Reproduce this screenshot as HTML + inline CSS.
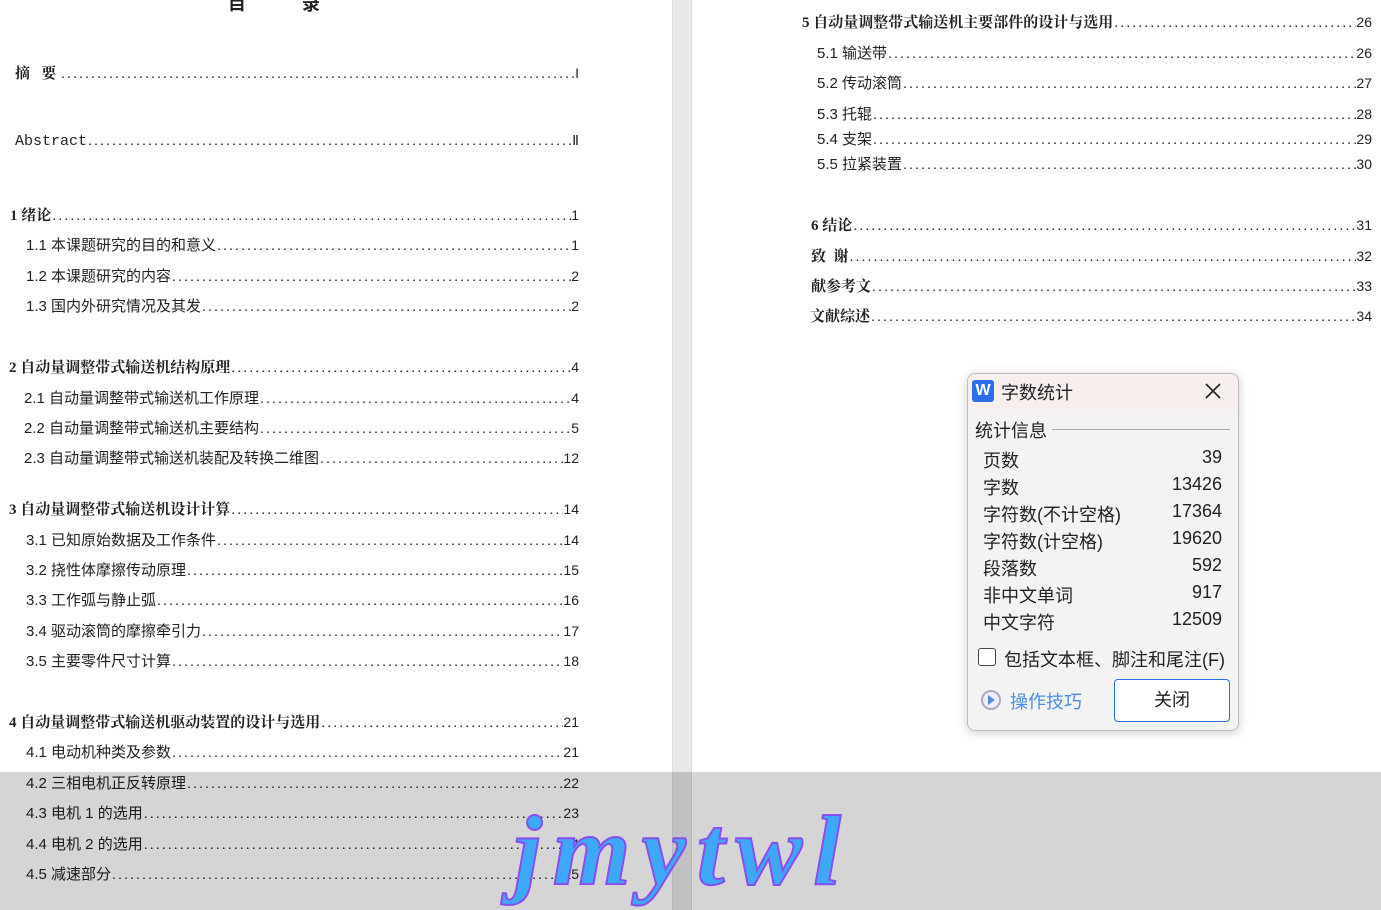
<!DOCTYPE html><html><head><meta charset="utf-8"><style>
*{margin:0;padding:0;box-sizing:border-box}
body{width:1381px;height:910px;overflow:hidden;background:#fff;position:relative;font-family:"Liberation Sans","Noto Sans CJK SC",sans-serif;color:#222}
.gut{position:absolute;left:672px;top:0;width:20px;height:910px;background:#e8e8e8;border-left:1px solid #ddd;border-right:1px solid #ddd}
.r{position:absolute;display:flex;align-items:baseline;font-size:15px;line-height:18px;height:18px;white-space:nowrap}
.r .t{flex:none}
.r .d{flex:1;overflow:hidden;letter-spacing:0;font-family:"Liberation Mono",monospace;font-size:10px;font-weight:bold}
.r .d::after{content:"................................................................................................................................................................................................"}
.r .n{flex:none;font-family:"Liberation Sans",sans-serif;font-size:14px}
.b{font-weight:bold;font-family:"Liberation Serif","Noto Serif CJK SC",serif}
.dlg{position:absolute;left:967px;top:373px;width:272px;height:358px;background:#f3f3f3;border:1px solid #bdbdbd;border-radius:8px;box-shadow:0 2px 10px rgba(0,0,0,.2);font-size:18px;color:#222}
.row{position:absolute;left:15px;right:16px;display:flex;justify-content:space-between;font-size:18px}
.ov{position:absolute;left:0;top:772px;width:1381px;height:138px;background:rgba(0,0,0,.165)}
</style></head><body>
<div class="gut"></div>
<div style="position:absolute;left:228px;top:-10px;font-size:18px;font-weight:bold">目</div>
<div style="position:absolute;left:302px;top:-10px;font-size:18px;font-weight:bold">录</div>

<div class="r" style="left:15px;top:64px;width:564px"><span class="t b">摘&nbsp;&nbsp;&nbsp;要&nbsp;</span><span class="d"></span><span class="n">I</span></div>
<div class="r" style="left:15px;top:131px;width:564px"><span class="t" style="font-family:'Liberation Mono',monospace">Abstract</span><span class="d"></span><span class="n">Ⅱ</span></div>
<div class="r" style="left:10px;top:206px;width:569px"><span class="t b">1 绪论</span><span class="d"></span><span class="n">1</span></div>
<div class="r" style="left:26px;top:236px;width:553px"><span class="t">1.1 本课题研究的目的和意义 </span><span class="d"></span><span class="n">1</span></div>
<div class="r" style="left:26px;top:267px;width:553px"><span class="t">1.2 本课题研究的内容</span><span class="d"></span><span class="n">2</span></div>
<div class="r" style="left:26px;top:297px;width:553px"><span class="t">1.3 国内外研究情况及其发</span><span class="d"></span><span class="n">2</span></div>
<div class="r" style="left:9px;top:358px;width:570px"><span class="t b">2 自动量调整带式输送机结构原理</span><span class="d"></span><span class="n">4</span></div>
<div class="r" style="left:24px;top:389px;width:555px"><span class="t">2.1 自动量调整带式输送机工作原理</span><span class="d"></span><span class="n">4</span></div>
<div class="r" style="left:24px;top:419px;width:555px"><span class="t">2.2 自动量调整带式输送机主要结构</span><span class="d"></span><span class="n">5</span></div>
<div class="r" style="left:24px;top:449px;width:555px"><span class="t">2.3 自动量调整带式输送机装配及转换二维图</span><span class="d"></span><span class="n">12</span></div>
<div class="r" style="left:9px;top:500px;width:570px"><span class="t b">3 自动量调整带式输送机设计计算</span><span class="d"></span><span class="n">14</span></div>
<div class="r" style="left:26px;top:531px;width:553px"><span class="t">3.1 已知原始数据及工作条件</span><span class="d"></span><span class="n">14</span></div>
<div class="r" style="left:26px;top:561px;width:553px"><span class="t">3.2 挠性体摩擦传动原理</span><span class="d"></span><span class="n">15</span></div>
<div class="r" style="left:26px;top:591px;width:553px"><span class="t">3.3 工作弧与静止弧</span><span class="d"></span><span class="n">16</span></div>
<div class="r" style="left:26px;top:622px;width:553px"><span class="t">3.4 驱动滚筒的摩擦牵引力</span><span class="d"></span><span class="n">17</span></div>
<div class="r" style="left:26px;top:652px;width:553px"><span class="t">3.5 主要零件尺寸计算</span><span class="d"></span><span class="n">18</span></div>
<div class="r" style="left:9px;top:713px;width:570px"><span class="t b">4 自动量调整带式输送机驱动装置的设计与选用</span><span class="d"></span><span class="n">21</span></div>
<div class="r" style="left:26px;top:743px;width:553px"><span class="t">4.1 电动机种类及参数</span><span class="d"></span><span class="n">21</span></div>
<div class="r" style="left:26px;top:774px;width:553px"><span class="t">4.2 三相电机正反转原理</span><span class="d"></span><span class="n">22</span></div>
<div class="r" style="left:26px;top:804px;width:553px"><span class="t">4.3 电机 1 的选用</span><span class="d"></span><span class="n">23</span></div>
<div class="r" style="left:26px;top:835px;width:553px"><span class="t">4.4 电机 2 的选用</span><span class="d"></span><span class="n">24</span></div>
<div class="r" style="left:26px;top:865px;width:553px"><span class="t">4.5 减速部分</span><span class="d"></span><span class="n">25</span></div>

<div class="r" style="left:802px;top:13px;width:570px"><span class="t b">5 自动量调整带式输送机主要部件的设计与选用</span><span class="d"></span><span class="n">26</span></div>
<div class="r" style="left:817px;top:44px;width:555px"><span class="t">5.1 输送带</span><span class="d"></span><span class="n">26</span></div>
<div class="r" style="left:817px;top:74px;width:555px"><span class="t">5.2 传动滚筒</span><span class="d"></span><span class="n">27</span></div>
<div class="r" style="left:817px;top:105px;width:555px"><span class="t">5.3 托辊</span><span class="d"></span><span class="n">28</span></div>
<div class="r" style="left:817px;top:130px;width:555px"><span class="t">5.4 支架</span><span class="d"></span><span class="n">29</span></div>
<div class="r" style="left:817px;top:155px;width:555px"><span class="t">5.5 拉紧装置</span><span class="d"></span><span class="n">30</span></div>
<div class="r" style="left:811px;top:216px;width:561px"><span class="t b">6 结论</span><span class="d"></span><span class="n">31</span></div>
<div class="r" style="left:811px;top:247px;width:561px"><span class="t b">致&nbsp;&nbsp;谢</span><span class="d"></span><span class="n">32</span></div>
<div class="r" style="left:811px;top:277px;width:561px"><span class="t b">献参考文</span><span class="d"></span><span class="n">33</span></div>
<div class="r" style="left:810px;top:307px;width:562px"><span class="t b">文献综述</span><span class="d"></span><span class="n">34</span></div>

<div class="dlg">
 <div style="position:absolute;left:0;top:0;right:0;height:36px;background:#f6efed;border-radius:8px 8px 0 0"></div>
 <div style="position:absolute;left:4px;top:6px;width:22px;height:22px;background:#2a6ee8;border-radius:3px;color:#fff;font-weight:bold;font-size:16px;text-align:center;line-height:22px">W</div>
 <div style="position:absolute;left:33px;top:5px;font-size:18px">字数统计</div>
 <svg style="position:absolute;left:237px;top:9px" width="16" height="16"><path d="M1 1L15 15M15 1L1 15" stroke="#222" stroke-width="1.6"/></svg>
 <div style="position:absolute;left:7px;top:43px;font-size:18px">统计信息</div>
 <div style="position:absolute;left:84px;top:55px;right:8px;height:1px;background:#aaa"></div>
 <div class="row" style="top:73px"><span>页数</span><span>39</span></div>
 <div class="row" style="top:100px"><span>字数</span><span>13426</span></div>
 <div class="row" style="top:127px"><span>字符数(不计空格)</span><span>17364</span></div>
 <div class="row" style="top:154px"><span>字符数(计空格)</span><span>19620</span></div>
 <div class="row" style="top:181px"><span>段落数</span><span>592</span></div>
 <div class="row" style="top:208px"><span>非中文单词</span><span>917</span></div>
 <div class="row" style="top:235px"><span>中文字符</span><span>12509</span></div>
 <div style="position:absolute;left:10px;top:274px;width:18px;height:18px;border:1px solid #444;border-radius:3px;background:#fff"></div>
 <div style="position:absolute;left:36px;top:272px;font-size:18px">包括文本框、脚注和尾注(F)</div>
 <div style="position:absolute;left:13px;top:316px;width:20px;height:20px;border:2px solid #aab;border-radius:50%;background:#eef"></div>
 <div style="position:absolute;left:20px;top:321px;width:0;height:0;border-left:7px solid #5a8ad8;border-top:5px solid transparent;border-bottom:5px solid transparent"></div>
 <div style="position:absolute;left:42px;top:314px;font-size:18px;color:#4a8fe0">操作技巧</div>
 <div style="position:absolute;left:146px;top:305px;width:116px;height:43px;border:1px solid #2a6ee8;border-radius:4px;background:#fff;text-align:center;line-height:41px;font-size:18px">关闭</div>
</div>

<div class="ov"></div>
<svg style="position:absolute;left:500px;top:800px" width="360" height="110"><text x="14" y="84" font-family="Liberation Serif,serif" font-style="italic" font-weight="bold" font-size="100" fill="#3ea8f6" stroke="#8a4df0" stroke-width="2" letter-spacing="-2" textLength="325">jmytwl</text></svg>
</body></html>
